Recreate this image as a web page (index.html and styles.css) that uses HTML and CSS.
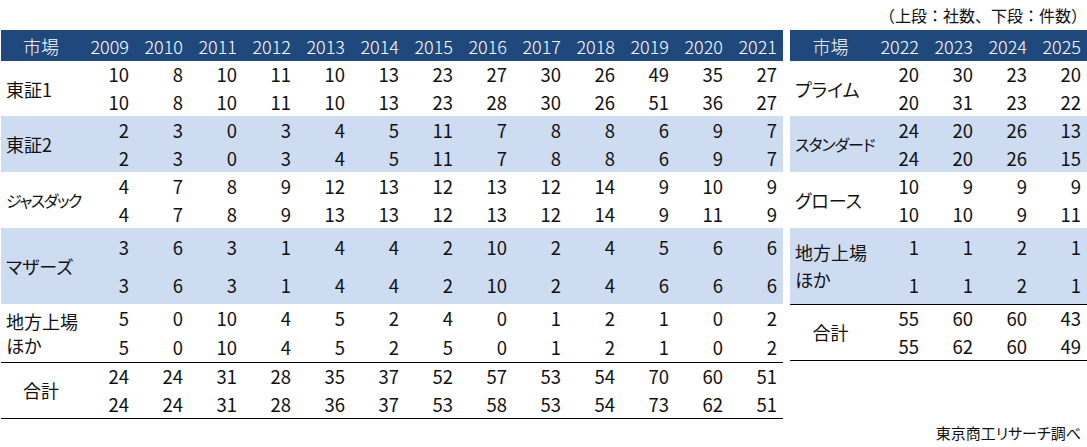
FILE: index.html
```html
<!DOCTYPE html>
<html lang="ja">
<head>
<meta charset="utf-8">
<title>市場別 件数</title>
<link rel="stylesheet" href="styles.css">
</head>
<body>
<div class="page">
  <div class="note">（上段：社数、下段：件数）</div>
  <div class="tables">
    <table class="t t-left">
      <colgroup><col class="c-lbl"><col><col><col><col><col><col><col><col><col><col><col><col><col></colgroup>
      <thead>
        <tr class="r-head"><th class="lbl-c">市場</th><th>2009</th><th>2010</th><th>2011</th><th>2012</th><th>2013</th><th>2014</th><th>2015</th><th>2016</th><th>2017</th><th>2018</th><th>2019</th><th>2020</th><th>2021</th></tr>
      </thead>
      <tbody>
        <tr class="r-a"><th rowspan="2" class="lbl">東証1</th><td>10</td><td>8</td><td>10</td><td>11</td><td>10</td><td>13</td><td>23</td><td>27</td><td>30</td><td>26</td><td>49</td><td>35</td><td>27</td></tr>
        <tr class="r-b"><td>10</td><td>8</td><td>10</td><td>11</td><td>10</td><td>13</td><td>23</td><td>28</td><td>30</td><td>26</td><td>51</td><td>36</td><td>27</td></tr>
        <tr class="r-b band"><th rowspan="2" class="lbl">東証2</th><td>2</td><td>3</td><td>0</td><td>3</td><td>4</td><td>5</td><td>11</td><td>7</td><td>8</td><td>8</td><td>6</td><td>9</td><td>7</td></tr>
        <tr class="r-b band"><td>2</td><td>3</td><td>0</td><td>3</td><td>4</td><td>5</td><td>11</td><td>7</td><td>8</td><td>8</td><td>6</td><td>9</td><td>7</td></tr>
        <tr class="r-b"><th rowspan="2" class="lbl small">ジャスダック</th><td>4</td><td>7</td><td>8</td><td>9</td><td>12</td><td>13</td><td>12</td><td>13</td><td>12</td><td>14</td><td>9</td><td>10</td><td>9</td></tr>
        <tr class="r-b"><td>4</td><td>7</td><td>8</td><td>9</td><td>13</td><td>13</td><td>12</td><td>13</td><td>12</td><td>14</td><td>9</td><td>11</td><td>9</td></tr>
        <tr class="r-tall band"><th rowspan="2" class="lbl">マザーズ</th><td>3</td><td>6</td><td>3</td><td>1</td><td>4</td><td>4</td><td>2</td><td>10</td><td>2</td><td>4</td><td>5</td><td>6</td><td>6</td></tr>
        <tr class="r-tall band"><td>3</td><td>6</td><td>3</td><td>1</td><td>4</td><td>4</td><td>2</td><td>10</td><td>2</td><td>4</td><td>6</td><td>6</td><td>6</td></tr>
        <tr class="r-mid"><th rowspan="2" class="lbl two">地方上場<br>ほか</th><td>5</td><td>0</td><td>10</td><td>4</td><td>5</td><td>2</td><td>4</td><td>0</td><td>1</td><td>2</td><td>1</td><td>0</td><td>2</td></tr>
        <tr class="r-mid"><td>5</td><td>0</td><td>10</td><td>4</td><td>5</td><td>2</td><td>5</td><td>0</td><td>1</td><td>2</td><td>1</td><td>0</td><td>2</td></tr>
        <tr class="r-b total-top"><th rowspan="2" class="lbl-c">合計</th><td>24</td><td>24</td><td>31</td><td>28</td><td>35</td><td>37</td><td>52</td><td>57</td><td>53</td><td>54</td><td>70</td><td>60</td><td>51</td></tr>
        <tr class="r-b total-bottom"><td>24</td><td>24</td><td>31</td><td>28</td><td>36</td><td>37</td><td>53</td><td>58</td><td>53</td><td>54</td><td>73</td><td>62</td><td>51</td></tr>
      </tbody>
    </table>
    <table class="t t-right">
      <colgroup><col class="c-lbl2"><col><col><col><col></colgroup>
      <thead>
        <tr class="r-head"><th class="lbl-c">市場</th><th>2022</th><th>2023</th><th>2024</th><th>2025</th></tr>
      </thead>
      <tbody>
        <tr class="r-a"><th rowspan="2" class="lbl">プライム</th><td>20</td><td>30</td><td>23</td><td>20</td></tr>
        <tr class="r-b"><td>20</td><td>31</td><td>23</td><td>22</td></tr>
        <tr class="r-b band"><th rowspan="2" class="lbl small2">スタンダード</th><td>24</td><td>20</td><td>26</td><td>13</td></tr>
        <tr class="r-b band"><td>24</td><td>20</td><td>26</td><td>15</td></tr>
        <tr class="r-b"><th rowspan="2" class="lbl">グロース</th><td>10</td><td>9</td><td>9</td><td>9</td></tr>
        <tr class="r-b"><td>10</td><td>10</td><td>9</td><td>11</td></tr>
        <tr class="r-tall band"><th rowspan="2" class="lbl two2">地方上場<br>ほか</th><td>1</td><td>1</td><td>2</td><td>1</td></tr>
        <tr class="r-tall band"><td>1</td><td>1</td><td>2</td><td>1</td></tr>
        <tr class="r-b total-top"><th rowspan="2" class="lbl-c">合計</th><td>55</td><td>60</td><td>60</td><td>43</td></tr>
        <tr class="r-b total-bottom"><td>55</td><td>62</td><td>60</td><td>49</td></tr>
      </tbody>
    </table>
  </div>
  <div class="source">東京商工リサーチ調べ</div>
</div>
</body>
</html>
```
FILE: styles.css
```css
html, body {
  margin: 0;
  padding: 0;
  background: #ffffff;
}
body {
  font-family: "Noto Sans CJK JP", "Noto Sans", sans-serif;
  color: #111111;
}
.page {
  width: 1087px;
  height: 447px;
  display: flex;
  flex-direction: column;
}
.note {
  height: 30px;
  line-height: 30px;
  font-size: 16px;
  text-align: right;
  padding-right: 0;
}
.tables {
  display: flex;
  align-items: flex-start;
  gap: 7px;
  padding-left: 1px;
}
.t {
  border-collapse: collapse;
  table-layout: fixed;
  font-size: 18.5px;
}
.t-left { width: 782px; }
.t-right { width: 297px; }
.c-lbl { width: 80px; }
.c-lbl2 { width: 81px; }
.t th, .t td {
  padding: 0 6px 0 0;
  font-weight: normal;
  text-align: right;
  vertical-align: middle;
  white-space: nowrap;
  line-height: 1;
}
.t thead th {
  background: #1f497d;
  color: #ffffff;
  font-size: 18px;
  font-weight: 300;
}
.t th.lbl {
  text-align: left;
  padding: 0 0 0 5px;
  font-size: 18px;
  font-feature-settings: "palt";
}
.t th.lbl-c {
  text-align: center;
  padding: 0;
  font-size: 18px;
}
.t th.small {
  font-size: 16px;
  letter-spacing: -1.5px;
}
.t th.small2 {
  font-size: 16px;
  letter-spacing: -1px;
}
.t th.two { line-height: 24px; }
.t th.two2 { line-height: 27px; }
.r-head { height: 31px; }
.r-a { height: 27px; }
.r-b { height: 28px; }
.r-mid { height: 29px; }
.r-tall { height: 38px; }
.band th, .band td { background: #cddcf1; }
.total-top th, .total-top td { border-top: 1px solid #000; }
.total-bottom td { border-bottom: 1px solid #000; }
.total-top th { border-bottom: 1px solid #000; }
.source {
  margin-top: auto;
  height: 28px;
  line-height: 28px;
  font-size: 15px;
  text-align: right;
  padding-right: 6px;
  font-feature-settings: "palt";
}
```
